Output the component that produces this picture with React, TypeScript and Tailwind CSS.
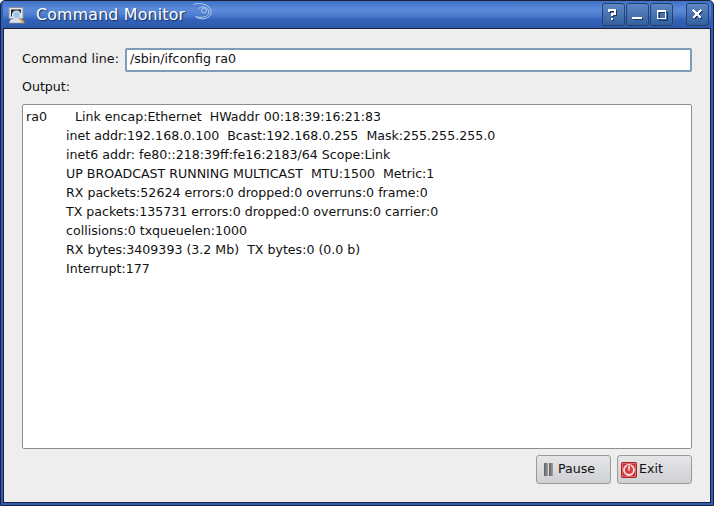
const font = { fontFamily: '"DejaVu Sans", sans-serif' };

const lines = [
  "inet addr:192.168.0.100  Bcast:192.168.0.255  Mask:255.255.255.0",
  "inet6 addr: fe80::218:39ff:fe16:2183/64 Scope:Link",
  "UP BROADCAST RUNNING MULTICAST  MTU:1500  Metric:1",
  "RX packets:52624 errors:0 dropped:0 overruns:0 frame:0",
  "TX packets:135731 errors:0 dropped:0 overruns:0 carrier:0",
  "collisions:0 txqueuelen:1000",
  "RX bytes:3409393 (3.2 Mb)  TX bytes:0 (0.0 b)",
  "Interrupt:177",
];

function TitleButton({ children }: { children: React.ReactNode }) {
  return (
    <div className="flex h-[23px] w-[23px] items-center justify-center rounded-[3px] border border-[#24426f] bg-gradient-to-b from-[#5d88c4] to-[#33609f]">
      <svg width="15" height="15" viewBox="0 0 15 15" shapeRendering="crispEdges">
        {children}
      </svg>
    </div>
  );
}

function Glyph({ d }: { d: string }) {
  return (
    <>
      <path d={d} transform="translate(1 1)" fill="none" stroke="#1d3560" strokeWidth="2" />
      <path d={d} fill="none" stroke="#ffffff" strokeWidth="2" />
    </>
  );
}

export default function App() {
  return (
    <div className="h-[506px] w-[714px] overflow-hidden bg-white" style={font}>
      <div className="flex h-full flex-col rounded-t-[5px] border border-[#1a1f33] bg-[#2f5fb8] px-[2px] pb-[2px]">
        <div className="relative flex h-[27px] shrink-0 items-center bg-[linear-gradient(to_bottom,#3f70c8_0%,#5b8bd8_30%,#4f7fd0_50%,#3262b8_70%,#2c58aa_100%)]">
          <svg width="18" height="18" viewBox="0 0 18 18" className="ml-[5px] mt-[2px] shrink-0">
            <rect x="1" y="0.5" width="14" height="11" rx="1" fill="#e4e7ec" stroke="#8d939e" />
            <rect x="3" y="2.5" width="10" height="7" fill="#23262e" />
            <path d="M3 12h10l2 4H1z" fill="#dfe2e8" stroke="#8d939e" strokeWidth="0.6" />
            <circle cx="8.5" cy="8" r="4" fill="#9cc4ea" stroke="#e8eef6" strokeWidth="1.2" />
            <path d="M11.5 11l4.5 5" stroke="#dc9f3f" strokeWidth="2" />
          </svg>
          <span className="ml-[10px] text-[15.8px] tracking-[0.2px] text-white [text-shadow:1px_1px_1px_#14305f]">
            Command Monitor
          </span>
          <svg width="20" height="18" viewBox="0 0 20 18" className="ml-[8px] -mt-[5px] shrink-0" fill="none" stroke="#b4cbec" strokeWidth="1">
            <path d="M0.5 1.5c5-2 12-1 16 3c3 4 2 9-4 11c-4 1-8 0-10-2c3 1 8 1.5 11-0.5c3-2 3-6 0-8c-3-2-7-1-8 1" />
            <circle cx="11" cy="7.5" r="2.5" />
          </svg>
          <div className="ml-auto mr-[2px] flex gap-[1px]">
            <TitleButton><Glyph d="M3 5V3h6v4H6v2M6 11v2" /></TitleButton>
            <TitleButton><Glyph d="M2 11h10" /></TitleButton>
            <TitleButton><path d="M4 4h8v8H4z" transform="translate(1 1)" fill="none" stroke="#1d3560" strokeWidth="1" /><path d="M3 3h8v8H3z" fill="none" stroke="#fff" strokeWidth="1" /><path d="M3 3.5h8" stroke="#fff" strokeWidth="2" /></TitleButton>
            <div className="w-[11px]" />
            <TitleButton><Glyph d="M3 3l8 8M11 3l-8 8" /></TitleButton>
          </div>
        </div>
        <div className="flex min-h-0 flex-1 flex-col border border-[#1a1f33] bg-[#eeeeee] px-[18px] pb-[18px] pt-[18px] text-[12.6px] text-[#111]">
          <div className="flex h-[25px] shrink-0 items-center gap-[6px]">
            <span className="tracking-[0.1px]">Command line:</span>
            <div className="flex h-[24px] flex-1 items-center rounded-[2px] border-2 border-[#7d9cb8] bg-white pl-[3px]">
              /sbin/ifconfig ra0
            </div>
          </div>
          <div className="mt-[7px] flex h-[17px] shrink-0 items-center">Output:</div>
          <div className="mt-[8px] min-h-0 flex-1 rounded-[2px] border border-[#8f8f8f] bg-white pl-[3px] pt-[2px] leading-[19px]">
            <div className="flex h-[19px] whitespace-pre">
              <span className="w-[49px]">ra0</span>
              <span>Link encap:Ethernet  HWaddr 00:18:39:16:21:83</span>
            </div>
            {lines.map((l) => (
              <div key={l} className="h-[19px] whitespace-pre pl-[40px]">{l}</div>
            ))}
          </div>
          <div className="mt-[6px] flex shrink-0 justify-end gap-[6px]">
            <button className="flex h-[29px] w-[75px] items-center gap-[5px] rounded-[3px] border border-[#9a9a9a] bg-gradient-to-b from-[#e6e6e8] to-[#cfd0d4] pl-[7px]">
              <svg width="9" height="13" viewBox="0 0 9 13" className="shrink-0">
                <defs>
                  <linearGradient id="pauseA" x1="0" x2="1" y1="0" y2="0">
                    <stop offset="0" stopColor="#5f5f5f" />
                    <stop offset="1" stopColor="#a0a0a0" />
                  </linearGradient>
                </defs>
                <rect x="0" y="0" width="4" height="13" fill="url(#pauseA)" />
                <rect x="5" y="0" width="4" height="13" fill="url(#pauseA)" />
              </svg>
              Pause
            </button>
            <button className="flex h-[29px] w-[75px] items-center gap-[2px] rounded-[3px] border border-[#9a9a9a] bg-gradient-to-b from-[#e6e6e8] to-[#cfd0d4] pl-[3px]">
              <svg width="16" height="16" viewBox="0 0 16 16" className="shrink-0">
                <rect x="0.5" y="0.5" width="15" height="15" rx="1" fill="#cf2a30" stroke="#a32226" />
                <rect x="1.5" y="1.5" width="13" height="13" fill="none" stroke="#e4666a" strokeWidth="1" />
                <circle cx="8" cy="8" r="5" fill="#d8403f" stroke="#f6e4e4" strokeWidth="1.8" />
                <path d="M8 3V8.5" stroke="#d8403f" strokeWidth="3.4" />
                <path d="M8 3.5V8.5" stroke="#f6e4e4" strokeWidth="1.6" />
              </svg>
              Exit
            </button>
          </div>
        </div>
      </div>
    </div>
  );
}
